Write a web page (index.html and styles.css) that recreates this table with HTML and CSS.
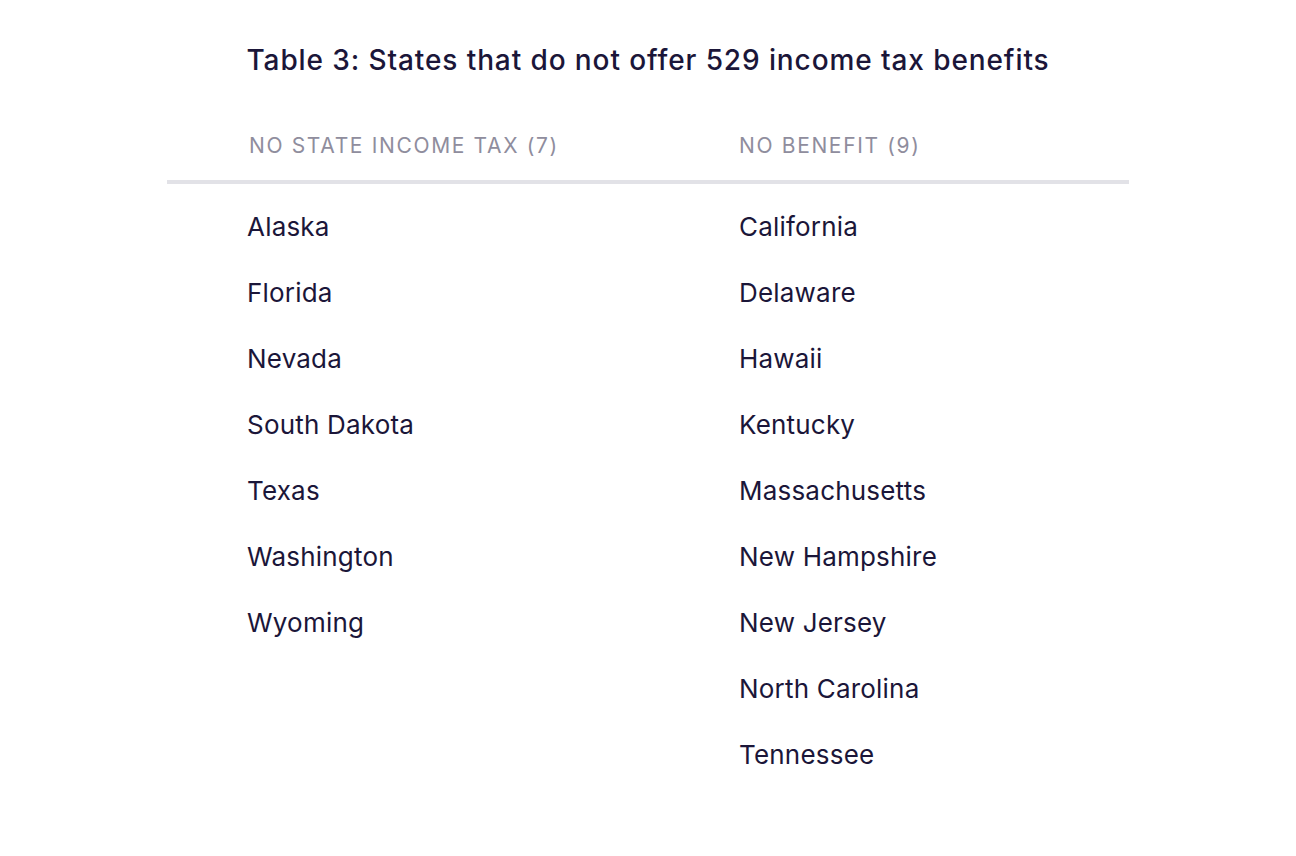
FILE: index.html
```html
<!DOCTYPE html>
<html>
<head>
<meta charset="utf-8">
<link rel="stylesheet" href="styles.css">
</head>
<body>
<div class="page">
  <h1 class="title">Table 3: States that do not offer 529 income tax benefits</h1>
  <div class="table">
    <div class="head">
      <div class="hcell">NO STATE INCOME TAX (7)</div>
      <div class="hcell">NO BENEFIT (9)</div>
    </div>
    <div class="body">
      <ul class="col">
        <li>Alaska</li>
        <li>Florida</li>
        <li>Nevada</li>
        <li>South Dakota</li>
        <li>Texas</li>
        <li>Washington</li>
        <li>Wyoming</li>
      </ul>
      <ul class="col">
        <li>California</li>
        <li>Delaware</li>
        <li>Hawaii</li>
        <li>Kentucky</li>
        <li>Massachusetts</li>
        <li>New Hampshire</li>
        <li>New Jersey</li>
        <li>North Carolina</li>
        <li>Tennessee</li>
      </ul>
    </div>
  </div>
</div>
</body>
</html>
```

FILE: styles.css
```css
* { box-sizing: border-box; }
html, body { margin: 0; padding: 0; background: #ffffff; }
body { font-family: "Inter", "Liberation Sans", sans-serif; color: #1b1639; }
.page { display: flex; flex-direction: column; align-items: center; padding-top: 40px; }
.title { margin: 0; font-size: 28px; font-weight: 500; letter-spacing: 0.9px; line-height: 40px; color: #1b1639; text-align: center; }
.table { width: 962px; margin-top: 44px; }
.head { display: grid; grid-template-columns: 490px 1fr; padding-left: 82px; height: 60px; border-bottom: 4px solid #e2e2e7; }
.hcell { font-size: 21px; letter-spacing: 1.65px; color: #8f8d9d; line-height: 30px; padding-top: 7px; }
.body { display: grid; grid-template-columns: 492px 1fr; padding-left: 80px; padding-top: 20px; }
.col { list-style: none; margin: 0; padding: 0; }
.col li { font-size: 26px; letter-spacing: 0.2px; line-height: 34px; height: 66px; padding-top: 6px; }
```
